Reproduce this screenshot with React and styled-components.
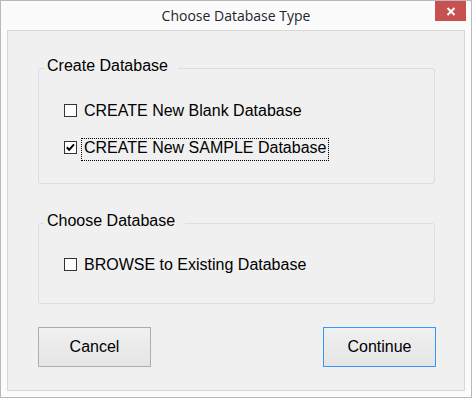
import React from 'react';
import styled, { createGlobalStyle } from 'styled-components';

const GlobalStyle = createGlobalStyle`
    body {
        margin: 0;
        background: #ffffff;
    }
`;

const Window = styled.div`
    width: 472px;
    height: 398px;
    box-sizing: border-box;
    border: 1px solid #b9b9b9;
    background: #fbfbfb;
    display: flex;
    flex-direction: column;
`;

const TitleBar = styled.div`
    height: 29px;
    display: grid;
    grid-template-columns: 1fr auto 1fr;
    align-items: start;
`;

const Title = styled.div`
    grid-column: 2;
    font-family: "Open Sans", "Noto Sans", sans-serif;
    font-size: 14px;
    line-height: 30px;
    color: #1e2430;
`;

const CloseButton = styled.button`
    grid-column: 3;
    justify-self: end;
    width: 31px;
    height: 20px;
    margin-right: 5px;
    padding: 0;
    border: 0;
    background: #c75050;
    display: flex;
    align-items: center;
    justify-content: center;
`;

const Client = styled.div`
    flex: 1;
    margin: 0 6px 6px;
    border: 1px solid #d7d7d7;
    background: #f0f0f0;
    display: flex;
    flex-direction: column;
    font-family: "Liberation Sans", Arial, sans-serif;
    font-size: 16px;
    color: #000;
`;

const GroupBox = styled.fieldset`
    margin: ${p => p.$top}px 29px 0 30px;
    padding: ${p => p.$padTop}px 0 ${p => p.$padBottom}px 0;
    border: 1px solid #d5dfe5;
    border-radius: 3px;
    min-width: 0;
`;

const Legend = styled.legend`
    margin-left: 5px;
    padding: 0 10px 4px 3px;
    line-height: 18px;
`;

const CheckRow = styled.label`
    display: flex;
    align-items: flex-start;
    margin-left: 25px;

    & + & {
        margin-top: 14px;
    }
`;

const CheckBox = styled.span`
    width: 13px;
    height: 13px;
    box-sizing: border-box;
    margin: 3px 4px 0 0;
    border: 1px solid #333333;
    background: #ffffff;
    display: flex;
    align-items: center;
    justify-content: center;
`;

const Caption = styled.span`
    line-height: 18px;
    padding: 0 2px 3px;
    border: 1px ${p => (p.$focused ? 'dotted #000' : 'solid transparent')};
`;

const ButtonRow = styled.div`
    display: flex;
    justify-content: space-between;
    margin: 23px 28px 0 30px;
`;

const Button = styled.button`
    width: 113px;
    height: 40px;
    padding: 0;
    border: 1px solid ${p => (p.$default ? '#3399ff' : '#adadad')};
    background: linear-gradient(#f0f0f0, #e5e5e5);
    font-family: "Liberation Sans", Arial, sans-serif;
    font-size: 16px;
    color: #000;
`;

const Check = ({ checked, focused, children }) => (
    <CheckRow>
        <CheckBox>
            {checked && (
                <svg width="11" height="11" viewBox="0 0 11 11">
                    <polyline points="1.8,5.2 4.2,7.8 9,2.4" fill="none" stroke="#000" strokeWidth="2" />
                </svg>
            )}
        </CheckBox>
        <Caption $focused={focused}>{children}</Caption>
    </CheckRow>
);

export default function App() {
    return (
        <>
            <GlobalStyle />
            <Window>
                <TitleBar>
                    <Title>Choose Database Type</Title>
                    <CloseButton aria-label="Close">
                        <svg width="10" height="9" viewBox="0 0 10 9">
                            <path d="M1.5 1 L8.5 8 M8.5 1 L1.5 8" stroke="#fff" strokeWidth="2" />
                        </svg>
                    </CloseButton>
                </TitleBar>
                <Client>
                    <GroupBox $top={26} $padTop={22} $padBottom={22}>
                        <Legend>Create Database</Legend>
                        <Check>CREATE New Blank Database</Check>
                        <Check checked focused>CREATE New SAMPLE Database</Check>
                    </GroupBox>
                    <GroupBox $top={28} $padTop={21} $padBottom={25}>
                        <Legend>Choose Database</Legend>
                        <Check>BROWSE to Existing Database</Check>
                    </GroupBox>
                    <ButtonRow>
                        <Button>Cancel</Button>
                        <Button $default>Continue</Button>
                    </ButtonRow>
                </Client>
            </Window>
        </>
    );
}
